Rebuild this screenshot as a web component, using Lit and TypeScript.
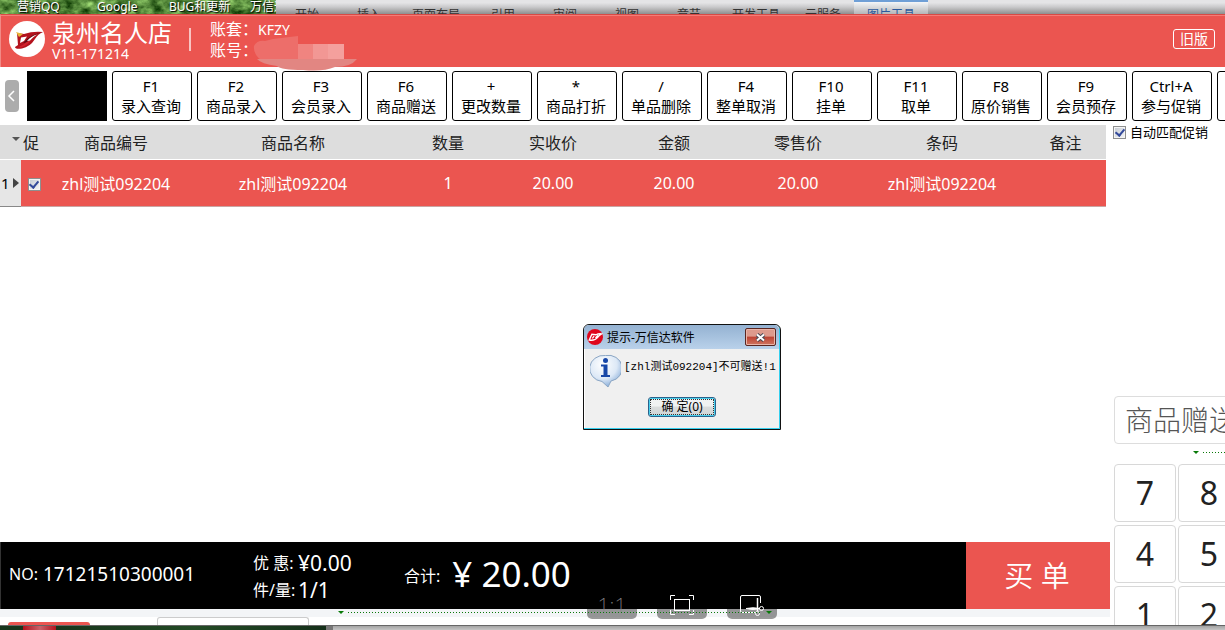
import { LitElement, html, css, svg } from "lit";
import { customElement, state } from "lit/decorators.js";

const TABS = ["开始", "插入", "页面布局", "引用", "审阅", "视图", "章节", "开发工具", "云服务", "图片工具"];

const ACTIONS: [string, string][] = [
  ["F1", "录入查询"],
  ["F2", "商品录入"],
  ["F3", "会员录入"],
  ["F6", "商品赠送"],
  ["+", "更改数量"],
  ["*", "商品打折"],
  ["/", "单品删除"],
  ["F4", "整单取消"],
  ["F10", "挂单"],
  ["F11", "取单"],
  ["F8", "原价销售"],
  ["F9", "会员预存"],
  ["Ctrl+A", "参与促销"],
];

const COLUMNS = ["商品编号", "商品名称", "数量", "实收价", "金额", "零售价", "条码", "备注"];
const ROW = ["zhl测试092204", "zhl测试092204", "1", "20.00", "20.00", "20.00", "zhl测试092204", ""];

const brandMark = svg`
  <path d="M8 12 L15 13 Q24 10 34 11 Q29 13 26 18 Q21 26 13 27.500 Q6 28.500 6 26 L9 24 Z" fill="#b3121d"/>
  <path d="M12 16.500 L18 15.500 L15 20 L11 22 Z" fill="#fff"/>
  <path d="M9 26 Q17 23 20 18 L23 17 Q20 24 12 26.500 Z" fill="#d0202b"/>
  <path d="M14 22 Q22 13 34 11 Q26 13 21 18 Q18 22 14 22 Z" fill="#5c0b12"/>
  <path d="M18 20 Q22 15 28 13.500 Q24 16 21 19.500 Z" fill="#fff"/>
  <path d="M7 11 L14 13 L10 16 Z" fill="#e8b53a"/>`;

@customElement("app-root")
export class AppRoot extends LitElement {
  @state() private dialogOpen = true;

  static styles = css`
    :host {
      display: flex;
      flex-direction: column;
      height: 100vh;
      overflow: hidden;
      position: relative;
      background: #fff;
      color: #000;
      font-family: "Noto Sans", "Noto Sans CJK SC", sans-serif;
      font-size: 16px;
    }
    * { box-sizing: border-box; }
    button, input { font: inherit; color: inherit; margin: 0; padding: 0; }
    button { cursor: pointer; }
    svg { display: block; }

    .desktop { display: flex; height: 14px; flex: none; font-size: 12px; overflow: hidden; }
    .shortcuts {
      position: relative;
      display: grid;
      grid-template-columns: 80px 72px 81px 26px;
      width: 276px;
      padding-left: 17px;
      flex: none;
      line-height: 14px;
      white-space: nowrap;
      overflow: hidden;
      color: #fff;
      text-shadow: 1px 1px 1px #000;
      background: #4f8638;
    }
    .grass { position: absolute; inset: 0; width: 100%; height: 100%; }
    .shortcuts span { position: relative; }
    .ribbon {
      flex: 1;
      display: flex;
      color: #333;
      background: linear-gradient(#e4e4e6 20%, #c9c9cb 50%, #8e8e8e);
      overflow: hidden;
    }
    .tab { min-width: 62px; padding: 7px 12px 0; text-align: center; line-height: 16px; white-space: nowrap; }
    .tab.on { color: #2c5a9c; border-top: 2px solid #6f9fd6; padding: 5px 13px 0; background: linear-gradient(#f4f6f8, #b4b6b8); }

    .brandbar {
      flex: none;
      display: flex;
      align-items: center;
      height: 53px;
      padding: 0 10px 0 8px;
      background: #eb5550;
      border-top: 1px solid #d84a45;
      border-left: 1px solid #f28a86;
      box-shadow: inset 0 1px #f47c77;
      color: #fff;
    }
    .logo { width: 36px; height: 36px; margin-right: 7px; margin-bottom: 4px; }
    .store { width: 137px; padding-bottom: 2px; }
    .store h1 { margin: 0; font-size: 24px; line-height: 27px; font-weight: 400; white-space: nowrap; }
    .version { font-size: 14px; line-height: 16px; }
    .bar { width: 2px; height: 23px; background: #f9c4c2; margin-right: 19px; margin-bottom: 4px; }
    .account { display: grid; grid-template-columns: 48px 110px; line-height: 21px; margin: 0 0 2px; flex: 1; position: relative; }
    .account dt, .account dd { margin: 0; white-space: nowrap; }
    .account dd { font-size: 14px; }
    .smudge { position: absolute; left: 43px; top: 17px; }
    .legacy { width: 42px; height: 20px; border: 1px solid #fff; border-radius: 3px; background: none; font-size: 14px; line-height: 16px; margin-bottom: 4px; }

    .actions { flex: none; display: flex; align-items: center; gap: 5px; height: 58px; padding: 0 0 0 5px; overflow: hidden; }
    .fold { flex: none; width: 14px; height: 32px; margin-right: 3px; border: 0; border-radius: 4px; background: #acacac; }
    .action { flex: none; width: 80px; height: 50px; padding-right: 2px; border: 1px solid #000; border-radius: 3px; background: #fff; font-size: 15px; line-height: 20px; white-space: nowrap; }
    .action span { display: block; }
    .action.dark { background: #000; border-radius: 0; }

    .body { flex: 1; min-height: 0; display: flex; }
    .sale { flex: 1; min-width: 0; display: flex; flex-direction: column; }
    .lines { flex: 1; padding-right: 4px; }
    table { width: 100%; table-layout: fixed; border-collapse: separate; border-spacing: 0; }
    th, td { padding: 0; text-align: center; font-weight: 400; white-space: nowrap; }
    thead th { height: 35px; background: #ddd; border-bottom: 1px solid #fff; color: #222; }
    tbody th, tbody td { height: 47px; border-bottom: 1px solid #c9a5a3; }
    tbody td { background: #eb5550; color: #fff; }
    tbody th { background: #e6e6e6; border-bottom-color: #888; font-size: 15px; }
    .promo { text-align: left; padding-left: 2px; }
    .pointer { display: flex; align-items: center; gap: 3px; padding-left: 1px; }
    .sort { margin: 0 0 6px 12px; }
    .tick {
      appearance: none;
      width: 13px;
      height: 13px;
      display: inline-grid;
      place-content: center;
      border: 1px solid #8e8f8f;
      background: linear-gradient(135deg, #c3c9d2, #f6f6f6);
      box-shadow: inset 0 0 0 1px #f4f4f4;
      vertical-align: middle;
    }
    .tick:checked::before {
      content: "";
      width: 4px;
      height: 7px;
      margin-bottom: 2px;
      border: solid #33499a;
      border-width: 0 2px 2px 0;
      transform: rotate(40deg);
    }

    .settle { flex: none; display: flex; align-items: stretch; height: 67px; background: #000; color: #fff; white-space: nowrap; }
    .order { display: flex; align-items: center; gap: 5px; width: 253px; padding: 0 0 4px 8px; border-left: 1px solid #333; }
    .order b { font-weight: 400; font-size: 19px; }
    .tally { display: grid; grid-template-columns: 45px 106px; grid-auto-rows: 27px; align-content: center; align-items: center; line-height: 27px; padding-top: 2px; }
    .tally b, .total b { font-weight: 400; }
    .tally b { font-size: 21px; }
    .total { flex: 1; display: flex; align-items: center; gap: 12px; padding-bottom: 2px; }
    .total b { font-size: 35px; line-height: 60px; padding-bottom: 2px; }
    .pay { width: 144px; padding: 0 2px 4px 0; border: 0; background: #eb5550; font-size: 29px; font-weight: 350; }
    .under { flex: none; height: 16px; display: flex; align-items: flex-end; padding-left: 8px; gap: 67px; background: linear-gradient(#f3f5f7 8px, #fff 8px); }
    .stub { width: 82px; height: 3px; background: #eb5550; border-radius: 3px 3px 0 0; }
    .slot { width: 152px; height: 8px; border: 1px solid #ccc; border-bottom: 0; border-radius: 3px 3px 0 0; background: #fff; }

    .side { flex: none; width: 115px; padding-left: 3px; display: flex; flex-direction: column; overflow: hidden; }
    .auto { display: flex; align-items: center; gap: 4px; height: 15px; font-size: 13px; line-height: 15px; white-space: nowrap; margin-bottom: auto; }
    .entry { width: 190px; height: 48px; flex: none; margin-left: 1px; padding: 0 0 2px 10px; border: 1px solid #ddd; border-radius: 4px; background: #fff; color: #555; font-size: 28px; font-weight: 300; outline: 0; }
    .hint { height: 20px; flex: none; display: flex; align-items: center; gap: 4px; padding: 0 0 3px 80px; }
    .dots { flex: 1; height: 1px; background: repeating-linear-gradient(90deg, #0a7a0a 0 1px, transparent 1px 3px); }
    .keys { flex: none; display: grid; grid-template-columns: 62px 62px; grid-auto-rows: 58px; gap: 3px 2px; margin: 0 0 -19px 1px; }
    .key { border: 1px solid #d8d8d8; border-radius: 4px; background: #fff; color: #222; font-size: 32px; line-height: 40px; }

    .floor { flex: none; display: flex; height: 5px; border-top: 1px solid #666; position: relative; z-index: 1; background: linear-gradient(#a4a4a4, #c4c4c4); }
    .lawn { width: 326px; background: linear-gradient(90deg, #18351c 23px, #b3121d 23px, #c9626a 40px, #b3121d 56px, #18351c 56px, #234a25 60%, #15301a); }
    .edge { width: 7px; background: #777; }

    .viewer { position: absolute; left: 587px; bottom: 11px; display: flex; gap: 20px; }
    .tool { width: 50px; height: 28px; border: 0; border-radius: 0 0 5px 5px; background: linear-gradient(transparent 18px, rgba(70, 70, 70, 0.55) 18px); color: #888; font-size: 21px; font-weight: 200; line-height: 26px; }
    .tool svg { margin: auto; }
    .guide { position: absolute; left: 338px; width: 434px; bottom: 14px; height: 8px; display: flex; align-items: center; gap: 4px; }

    .dialog {
      position: absolute;
      left: 583px;
      top: 324px;
      width: 198px;
      height: 106px;
      padding: 0 1px 1px 0;
      border: 1px solid #111;
      border-radius: 6px 6px 0 0;
      background: #f0f0f0;
      box-shadow: inset -1px -1px #35cfee, inset 1px 1px #fff;
    }
    .caption { display: flex; align-items: center; height: 24px; padding: 0 3px; gap: 4px; border-radius: 5px 5px 0 0; background: linear-gradient(#94b2d2, #b9d1ea); font-size: 12px; }
    .caption span { flex: 1; white-space: nowrap; }
    .close { width: 31px; height: 18px; display: grid; place-content: center; border: 1px solid #5a2620; border-radius: 2px; background: linear-gradient(#dd9a8c 45%, #bc4232 50%, #cf7560); box-shadow: inset 0 0 0 1px #e9b4a8; }
    .notice { display: flex; gap: 3px; padding: 5px 0 0 6px; }
    .notice p { margin: 0; padding-top: 5px; font: 11px/16px "Liberation Mono", "Noto Sans CJK SC", monospace; white-space: nowrap; }
    .ok { display: block; width: 68px; height: 20px; margin: 8px auto 0 64px; padding: 1px; border: 1px solid #2c628b; border-radius: 3px; background: linear-gradient(#f0f2f2 45%, #dadddd 50%, #d0d4d6); box-shadow: inset 0 0 0 1px #48d0ee; font-size: 12px; line-height: 14px; }
    .ok span { display: block; border: 1px dotted #333; }
  `;

  render() {
    return html`
      <div class="desktop">
        <div class="shortcuts">
          <svg class="grass" aria-hidden="true">
            <filter id="blades" x="0" y="0" width="100%" height="100%" color-interpolation-filters="sRGB">
              <feTurbulence type="fractalNoise" baseFrequency=".08 .12" numOctaves="4" seed="7"/>
              <feColorMatrix values=".9 0 0 0 -.13  1 0 0 0 .02  .7 0 0 0 -.13  0 0 0 0 1"/>
            </filter>
            <rect width="100%" height="100%" filter="url(#blades)"/>
          </svg>
          <span>营销QQ</span><span>Google</span><span>BUG和更新</span><span>万信达</span>
        </div>
        <div class="ribbon">
          ${TABS.map((t, i) => html`<span class="tab ${i === TABS.length - 1 ? "on" : ""}">${t}</span>`)}
        </div>
      </div>

      <header class="brandbar">
        <svg class="logo" viewBox="0 0 36 36"><circle cx="18" cy="18" r="18" fill="#fff"/>${brandMark}</svg>
        <div class="store">
          <h1>泉州名人店</h1>
          <div class="version">V11-171214</div>
        </div>
        <div class="bar"></div>
        <dl class="account">
          <svg class="smudge" width="106" height="36" viewBox="0 0 106 36">
            <path d="M20 3 L45 0 L45 24 L8 24 Q0 18 1 10 Q4 4 12 5 Z" fill="#ed6e6a"/>
            <path d="M4 23 L104 23 Q98 31 82 31 Q70 36 50 34 Q28 34 24 30 Q8 28 4 23 Z" fill="#e28682"/>
            <rect x="45" y="8" width="15" height="15" fill="#f08480"/>
            <rect x="60" y="8" width="15" height="15" fill="#f29794"/>
            <rect x="75" y="8" width="16" height="15" fill="#f4a09d"/>
          </svg>
          <dt>账套：</dt><dd>KFZY</dd>
          <dt>账号：</dt><dd></dd>
        </dl>
        <button class="legacy">旧版</button>
      </header>

      <nav class="actions">
        <button class="fold" aria-label="向左">
          <svg width="14" height="12" viewBox="0 0 14 12"><path d="M9 1 L4 6 L9 11" fill="none" stroke="#fff" stroke-width="1.500"/></svg>
        </button>
        <button class="action dark" aria-label="更多"></button>
        ${ACTIONS.map(([k, n]) => html`<button class="action"><span>${k}</span><span>${n}</span></button>`)}
        <button class="action" aria-label="更多"></button>
      </nav>

      <main class="body">
        <section class="sale">
          <div class="lines">
            <table>
              <colgroup>
                ${[21, 26, 138, 216, 94, 116, 126, 122, 166, 81].map((w) => html`<col style="width:${w}px">`)}
              </colgroup>
              <thead>
                <tr>
                  <th><svg class="sort" width="8" height="4" viewBox="0 0 8 4"><path d="M0 0H8L4 4Z" fill="#555"/></svg></th>
                  <th class="promo">促</th>
                  ${COLUMNS.map((c) => html`<th>${c}</th>`)}
                </tr>
              </thead>
              <tbody>
                <tr>
                  <th><div class="pointer">1<svg width="6" height="10" viewBox="0 0 6 10"><path d="M0 0L6 5L0 10Z" fill="#444"/></svg></div></th>
                  <td><input class="tick" type="checkbox" checked aria-label="促"></td>
                  ${ROW.map((c) => html`<td>${c}</td>`)}
                </tr>
              </tbody>
            </table>
          </div>
          <div class="settle">
            <div class="order"><span>NO:</span><b>17121510300001</b></div>
            <div class="tally"><span>优 惠:</span><b>¥0.00</b><span>件/量:</span><b>1/1</b></div>
            <div class="total"><span>合计:</span><b>¥ 20.00</b></div>
            <button class="pay">买 单</button>
          </div>
          <div class="under"><div class="stub"></div><div class="slot"></div></div>
        </section>

        <aside class="side">
          <label class="auto"><input class="tick" type="checkbox" checked>自动匹配促销</label>
          <input class="entry" type="text" aria-label="输入" value="商品赠送">
          <div class="hint">${this.arrow()}<div class="dots"></div></div>
          <div class="keys">${["7", "8", "4", "5", "1", "2"].map((k) => html`<button class="key">${k}</button>`)}</div>
        </aside>
      </main>

      <div class="floor"><div class="lawn"></div><div class="edge"></div></div>

      <div class="viewer">
        <button class="tool">1:1</button>
        <button class="tool" aria-label="适应窗口">
          <svg width="24" height="20" viewBox="0 0 24 20" fill="none" stroke="#fff">
            <path d="M.5 5V.5H5M19 .5H23.500V5M23.500 15V19.500H19M5 19.500H.5V15"/><rect x="4.500" y="4.500" width="15" height="11"/>
          </svg>
        </button>
        <button class="tool" aria-label="截图">
          <svg width="24" height="21" viewBox="0 0 24 21" fill="none" stroke="#fff">
            <path d="M15 17.500H2Q.5 17.500 .5 16V2Q.5 .5 2 .5H19Q20.500 .5 20.500 2V8"/>
            <path d="M17.500 3V16" stroke-width="1.500"/><path d="M6 13.500Q13 12 20 13.500Q13 15.500 6 13.500Z" fill="#fff"/>
            <circle cx="21.500" cy="13.500" r="2"/><circle cx="17.500" cy="18.500" r="2"/>
          </svg>
        </button>
      </div>
      <div class="guide">${this.arrow()}<div class="dots"></div>${this.arrow()}</div>

      ${this.dialogOpen
        ? html`<div class="dialog" role="alertdialog" aria-label="提示-万信达软件">
            <div class="caption">
              <svg width="16" height="16" viewBox="0 0 36 36"><circle cx="18" cy="18" r="18" fill="#e0061c"/>
                <path d="M5 25 L11 12 L20 13 Q26 10 33 11 Q27 14 24 19 Q18 27 5 25 Z M12 21 L16 16 M19 20 L25 14" fill="none" stroke="#fff" stroke-width="3"/></svg>
              <span>提示-万信达软件</span>
              <button class="close" aria-label="关闭" @click=${this.dismiss}>
                <svg width="11" height="9" viewBox="0 0 11 9"><path d="M2 1.500L9 7.500M9 1.500L2 7.500" stroke="#4a4a55" stroke-width="4"/><path d="M2 1.500L9 7.500M9 1.500L2 7.500" stroke="#fff" stroke-width="2"/></svg>
              </button>
            </div>
            <div class="notice">
              <svg width="31" height="35" viewBox="0 0 31 35">
                <defs><radialGradient id="bubble" cx=".4" cy=".3" r=".8"><stop offset="0" stop-color="#fff"/><stop offset=".55" stop-color="#dce8f6"/><stop offset="1" stop-color="#6f9bd0"/></radialGradient></defs>
                <path d="M15.500 1.500A14 13 0 0 1 21 27L18 33L12 27.500A14 13 0 0 1 15.500 1.500Z" fill="url(#bubble)" stroke="#8ba6c4"/>
                <circle cx="15.500" cy="6.500" r="2.500" fill="#1747a8"/>
                <path d="M11 10.500H17.500V21H20V23H11V21H13.500V12.500H11Z" fill="#1747a8"/>
              </svg>
              <p>[zhl测试092204]不可赠送!1</p>
            </div>
            <button class="ok" @click=${this.dismiss}><span>确 定(0)</span></button>
          </div>`
        : null}
    `;
  }

  private arrow() {
    return html`<svg width="6" height="3" viewBox="0 0 6 3"><path d="M0 0H6L3 3Z" fill="#087a08"/></svg>`;
  }

  private dismiss() {
    this.dialogOpen = false;
  }
}
